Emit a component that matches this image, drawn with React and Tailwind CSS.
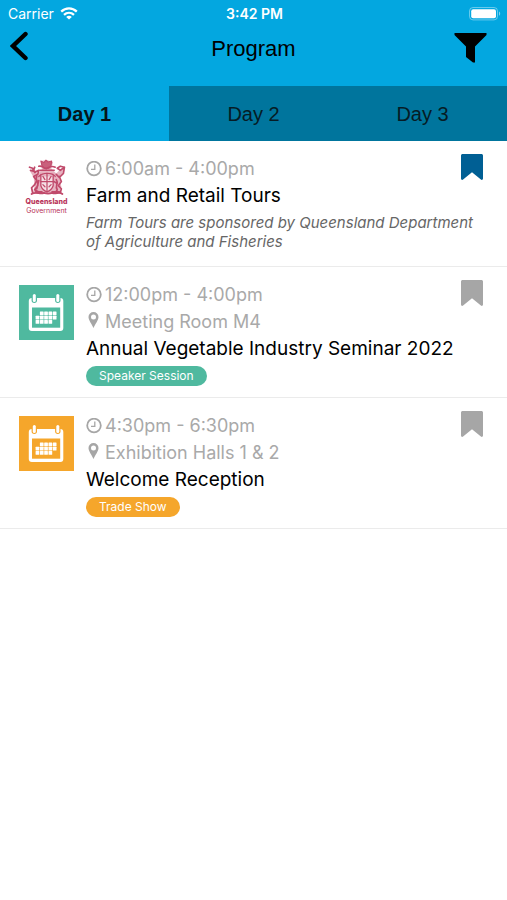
import React, { useState } from "react";

function WifiIcon() {
  return (
    <svg width="18" height="13" viewBox="0 0 18 13" fill="none" stroke="#fff" strokeWidth="2.3" aria-hidden="true">
      <path d="M1.2 4.6C5.6.3 12.4.3 16.8 4.6" />
      <path d="M4 7.8c2.9-2.7 7.1-2.7 10 0" />
      <path d="M9 12.6 6.2 9.9c1.6-1.4 4-1.4 5.6 0z" fill="#fff" stroke="none" />
    </svg>
  );
}

function BatteryIcon() {
  return (
    <svg width="32" height="14" viewBox="0 0 32 14" aria-hidden="true">
      <rect x="0.5" y="0.5" width="28" height="12.4" rx="3.5" fill="none" stroke="#fff" strokeOpacity="0.4" />
      <rect x="2.2" y="2.2" width="24.8" height="9" rx="2" fill="#fff" />
      <path d="M30 4.6c1.6.6 1.6 3.6 0 4.2z" fill="#fff" fillOpacity="0.5" />
    </svg>
  );
}

function ClockIcon() {
  return (
    <svg width="16" height="16" viewBox="0 0 16 16" fill="none" stroke="#a6a6a6" aria-hidden="true">
      <circle cx="8" cy="7.5" r="6.8" strokeWidth="1.8" />
      <path d="M8.8 3.6v4.7H5" strokeWidth="1.3" />
    </svg>
  );
}

function PinIcon() {
  return (
    <svg width="16" height="16" viewBox="0 0 16 16" fill="#a6a6a6" className="-mt-1" aria-hidden="true">
      <path
        fillRule="evenodd"
        d="M7.5 0a5 5 0 0 0-5 5c0 3 3.2 7 5 11 1.8-4 5-8 5-11a5 5 0 0 0-5-5zm0 2.5a2.5 2.5 0 1 1 0 5 2.5 2.5 0 0 1 0-5z"
      />
    </svg>
  );
}

function BookmarkIcon({ color }) {
  return (
    <svg width="22" height="26" viewBox="0 0 22 26" fill={color} aria-hidden="true">
      <path d="M1.6 0h18.8c.9 0 1.6.7 1.6 1.6v23c0 1.2-1.2 1.8-2.1 1L11 18.2l-8.9 7.400c-.9.800-2.100.2-2.100-1v-23C0 .7.7 0 1.600 0z" />
    </svg>
  );
}

const dayCells = [
  [20.9, 25.2, 29.5, 33.8].map((x) => [x, 26.5]),
  [16.6, 20.9, 25.2, 29.5, 33.8].map((x) => [x, 30.8]),
  [16.6, 20.9, 25.2, 29.5].map((x) => [x, 35.1]),
];

function CalendarIcon({ color }) {
  return (
    <svg width="55" height="55" viewBox="0 0 55 55" className="block" aria-hidden="true">
      <rect width="55" height="55" fill={color} />
      <rect x="9.8" y="13" width="34.5" height="33" rx="3" fill="#fff" />
      <rect x="13" y="22.5" width="28.2" height="20.2" fill={color} />
      <rect x="12.6" y="8" width="5.4" height="10" rx="2.7" fill={color} />
      <rect x="36.1" y="8" width="5.4" height="10" rx="2.7" fill={color} />
      <rect x="13.8" y="9" width="3" height="8" rx="1.5" fill="#fff" />
      <rect x="37.3" y="9" width="3" height="8" rx="1.5" fill="#fff" />
      <g fill="#fff">
        {dayCells.flat().map(([x, y]) => (
          <rect key={`${x}-${y}`} x={x} y={y} width="3.7" height="3.7" rx="0.5" />
        ))}
      </g>
    </svg>
  );
}

function QueenslandLogo() {
  return (
    <div className="flex w-[55px] flex-col items-center text-[#b8345a]" role="img" aria-label="Queensland Government">
      <svg width="40" height="38" viewBox="0 0 38 37" fill="none" stroke="#c04a6b" strokeLinecap="round" strokeLinejoin="round" aria-hidden="true">
        <path d="M13 2l6-1 6 2-2 6 5 5 5-5 3 2-5 7 2 9-2 7H5l2-8-1-8-4-7 4-1 4 5 4-5z" fill="#e7b3c1" stroke="none" />
        <path d="M14 6 13 2l3 1.5L18 1l2 2 3.500-1L23 6l-2 3h-5z" fill="#c9607c" strokeWidth="1" />
        <path d="M11 7c4-1 5 3 8 2s4-3 8-1M12 11h14" strokeWidth="1.6" />
        <path d="M2 8l3 1 2 4 4-2-1 4-4 2 3 4-2 4-3 3 1 5M7 8l-1 3M3 11l4 1" strokeWidth="1.7" />
        <path d="M36 8l-4-1-3 2 3 2 4-3-1 6-4 4-3-3M31 17l2 5-3 4 3 3-1 4" strokeWidth="1.6" />
        <path d="M11 17c3-3 5-3 8-3s6 0 8 3M13 15v11c1 3 3 5 6 6 3-1 5-3 6-6V15" fill="#f6dfe5" strokeWidth="1.3" />
        <path d="M19 14v18M13 22h12M15 17l2 3M23 17l-2 3M15 25l2 2M23 25l-2 2" strokeWidth="1.2" />
        <path d="M9 17c-2 4 2 5 1 9l-3 4 4 2M11 21l-2 8M28 20c3 4-2 6 1 10l-2 3M26 22l3 2" strokeWidth="1.6" />
        <path d="M4 34c5-3 8 1 12-1 3 1 5 1 8 0 4 2 6-2 10 1M8 32h6M24 32h7" strokeWidth="1.8" />
      </svg>
      <span className="text-[7px] leading-[9px] font-extrabold">Queensland</span>
      <span className="text-[7px] leading-[9px]">Government</span>
    </div>
  );
}

const sessions = [
  {
    time: "6:00am - 4:00pm",
    title: "Farm and Retail Tours",
    note: "Farm Tours are sponsored by Queensland Department of Agriculture and Fisheries",
    saved: true,
  },
  {
    time: "12:00pm - 4:00pm",
    place: "Meeting Room M4",
    title: "Annual Vegetable Industry Seminar 2022",
    tag: "Speaker Session",
    color: "#4fb99f",
    tagClass: "bg-[#4fb99f]",
  },
  {
    time: "4:30pm - 6:30pm",
    place: "Exhibition Halls 1 & 2",
    title: "Welcome Reception",
    tag: "Trade Show",
    color: "#f5a62b",
    tagClass: "bg-[#f5a62b]",
  },
];

function Session({ session }) {
  const [saved, setSaved] = useState(Boolean(session.saved));
  return (
    <li className="relative flex gap-3 border-b border-[#ebebeb] pt-3.5 pr-4 pb-[11px] pl-[19px]">
      <div className="shrink-0 pt-1">
        {session.color ? <CalendarIcon color={session.color} /> : <QueenslandLogo />}
      </div>
      <div className="min-w-0 flex-1">
        <p className="flex items-center gap-[3px] pr-10 text-[18px] leading-[27px] text-[#a9a9a9]">
          <ClockIcon />
          {session.time}
        </p>
        {session.place && (
          <p className="flex items-center gap-[3px] pr-10 text-[18px] leading-[27px] text-[#a9a9a9]">
            <PinIcon />
            {session.place}
          </p>
        )}
        <h2 className="text-[19px] leading-[27px] text-black">{session.title}</h2>
        {session.note && <p className="py-1 text-[15px] leading-[19px] text-[#666] italic">{session.note}</p>}
        {session.tag && (
          <span className={`mt-1 block w-fit rounded-full px-[13px] text-[12px] leading-[20px] text-white ${session.tagClass}`}>
            {session.tag}
          </span>
        )}
      </div>
      <button
        type="button"
        aria-label={`Bookmark ${session.title}`}
        aria-pressed={saved}
        onClick={() => setSaved(!saved)}
        className="absolute top-[13px] right-6"
      >
        <BookmarkIcon color={saved ? "#005f94" : "#a6a6a6"} />
      </button>
    </li>
  );
}

export default function App() {
  const [day, setDay] = useState(1);
  return (
    <div className="min-h-screen bg-white font-['Inter',sans-serif]">
      <header className="bg-[#03a7e0]">
        <div className="grid h-[27px] grid-cols-3 items-center pr-1.5 pl-2 text-[14px] text-white">
          <span className="flex items-center gap-1.5">
            Carrier
            <WifiIcon />
          </span>
          <span className="text-center font-semibold">3:42 PM</span>
          <span className="flex justify-end">
            <BatteryIcon />
          </span>
        </div>
        <div className="grid h-[59px] grid-cols-3 items-start px-2.5">
          <button type="button" aria-label="Back" className="mt-1 justify-self-start">
            <svg width="18" height="30" viewBox="0 0 18 30" fill="none" stroke="#000" strokeWidth="4.4" strokeLinecap="round" aria-hidden="true">
              <path d="M15.5 3 3 15l12.5 12" strokeLinejoin="miter" />
            </svg>
          </button>
          <h1 className="mt-2 text-center font-['Liberation_Sans',sans-serif] text-[22px] leading-[27px] text-black">Program</h1>
          <button type="button" aria-label="Filter" className="mt-1.5 mr-2.5 justify-self-end">
            <svg width="33" height="30" viewBox="0 0 33 30" fill="#000" aria-hidden="true">
              <path d="M.5 0h32v2L21 13.500V29.500h-2L12 24V13.500L.5 2z" />
            </svg>
          </button>
        </div>
        <nav className="grid h-[55px] grid-cols-3 font-['Liberation_Sans',sans-serif] text-[20px]">
          {[1, 2, 3].map((n) => (
            <button
              key={n}
              type="button"
              onClick={() => setDay(n)}
              aria-current={day === n ? "page" : undefined}
              className={day === n ? "font-bold text-[#06141a]" : "bg-[#00759d] text-[#061c25]"}
            >
              Day {n}
            </button>
          ))}
        </nav>
      </header>
      <ul>
        {sessions.map((session) => (
          <Session key={session.title} session={session} />
        ))}
      </ul>
    </div>
  );
}
